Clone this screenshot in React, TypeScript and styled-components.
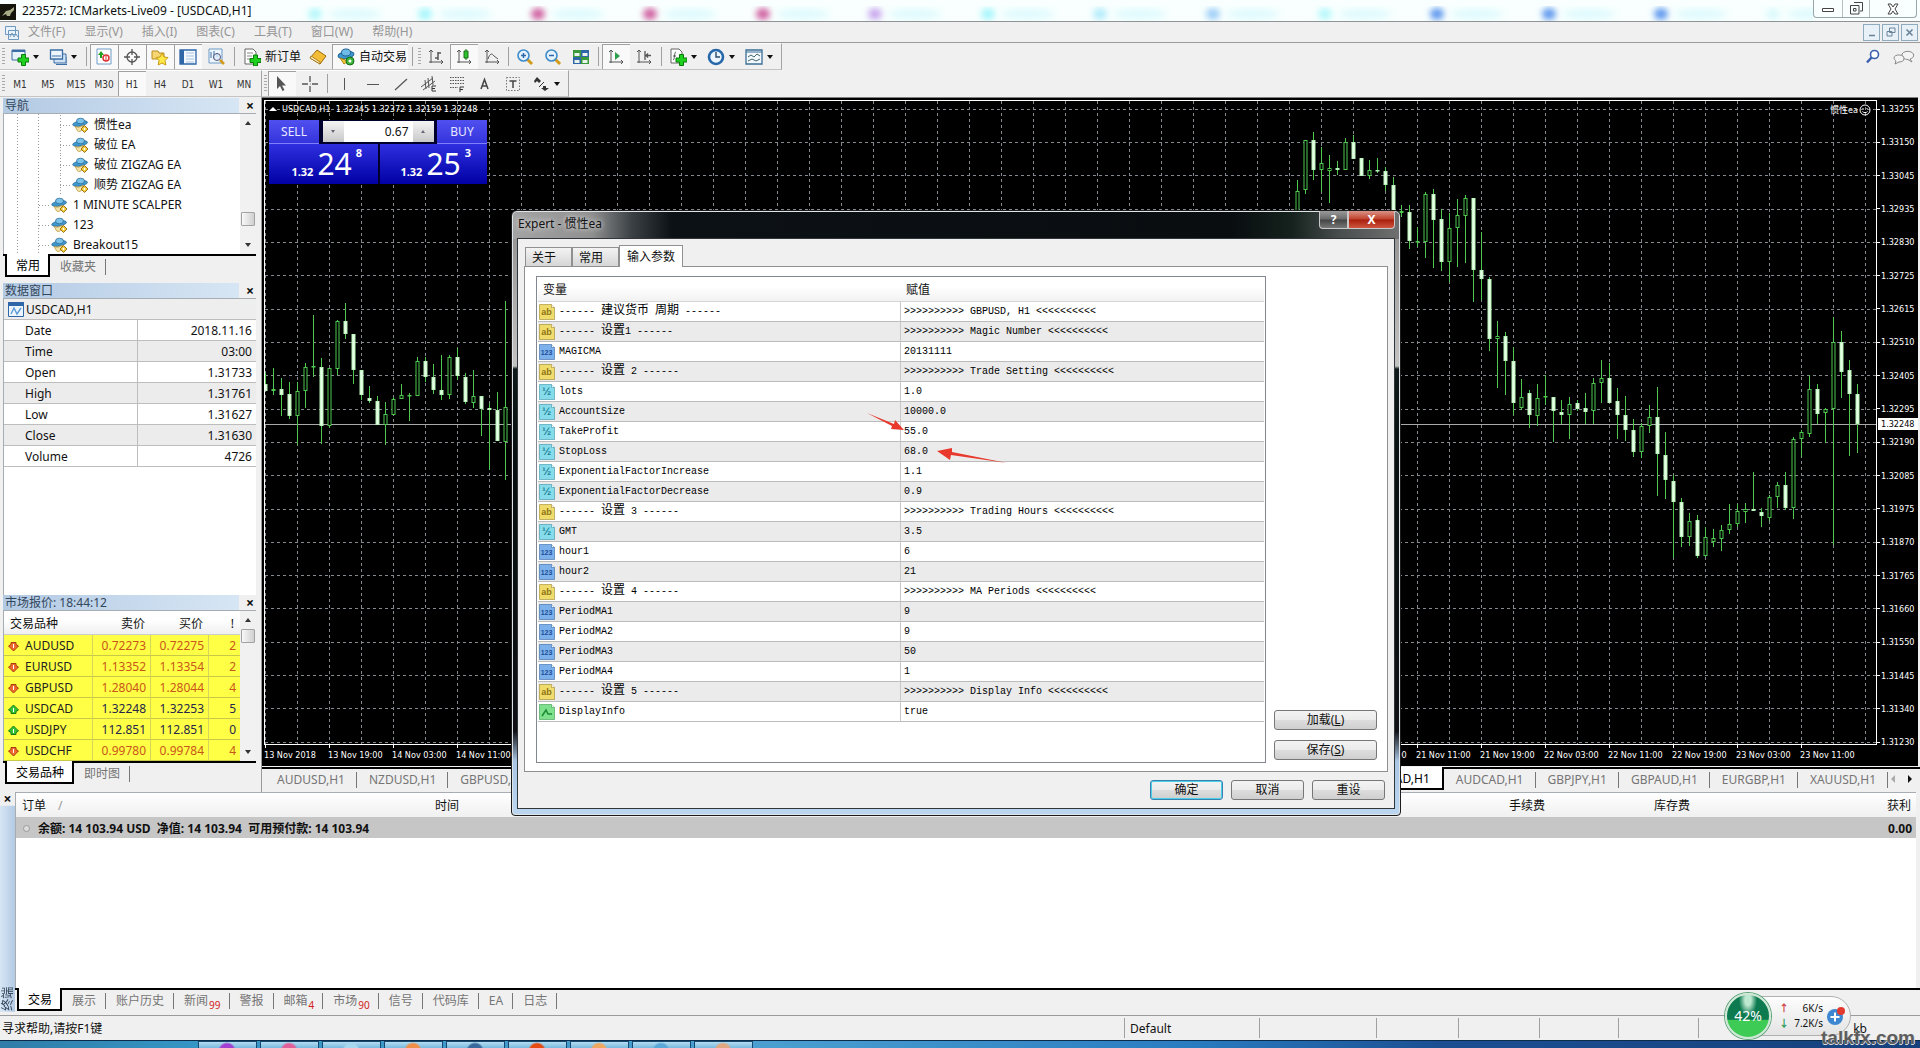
import React from "react";
import styled, { createGlobalStyle, css } from "styled-components";

const UI = `"Noto Sans", "Noto Sans CJK SC", sans-serif`;
const SMALL = `"DejaVu Sans Condensed", "Noto Sans", "Noto Sans CJK SC", sans-serif`;
const MONO = `"Liberation Mono", "Noto Sans CJK SC", monospace`;

const GlobalStyle = createGlobalStyle`
  *, *::before, *::after { box-sizing: border-box; }
  body { margin: 0; font: 12px/16px ${UI}; color: #111; background: #f0f0f0; overflow: hidden; }
  button, input { font: inherit; color: inherit; margin: 0; padding: 0; border: 0; background: none; border-radius: 0; }
  table { border-collapse: separate; border-spacing: 0; table-layout: fixed; width: 100%; }
  th, td { padding: 2px 0 0; font-weight: normal; text-align: left; white-space: nowrap; overflow: hidden; }
  svg { display: block; flex: none; }
`;

/* ---------- shell ---------- */
const Page = styled.div`
  position: relative;
  display: flex;
  flex-direction: column;
  height: 100vh;
  overflow: hidden;
`;
const TitleBar = styled.header`
  display: flex;
  align-items: stretch;
  flex: none;
  height: 22px;
  background-color: #f8fffe;
  border-bottom: 1px solid #8f9396;
`;
const AppName = styled.h1`
  display: flex;
  align-items: center;
  gap: 6px;
  margin: 0;
  font-size: 12px;
  line-height: 20px;
  font-weight: normal;
  white-space: nowrap;
`;
const Glow = styled.svg`
  flex: 1 1 0;
  min-width: 0;
  height: 21px;
`;
const WindowButtons = styled.div`
  display: flex;
  height: 18px;
  margin-right: 3px;
  border: 1px solid #97a6a8;
  border-top: 0;
  border-radius: 0 0 4px 4px;
`;
const WindowButton = styled.button<{ $w: number }>`
  display: flex;
  align-items: center;
  justify-content: center;
  width: ${(p) => p.$w}px;
  & + & { border-left: 1px solid #b4c0c2; }
`;
const MenuBar = styled.nav`
  display: flex;
  align-items: center;
  flex: none;
  height: 21px;
  padding-left: 5px;
  border-bottom: 1px solid #9b9b9b;
`;
const MenuItem = styled.button`
  margin-left: 9px;
  padding: 0 5px;
  color: #969696;
  white-space: nowrap;
  &:first-of-type { margin-left: 3px; }
`;
const MdiButtons = styled.div`
  display: flex;
  gap: 2px;
  margin-left: auto;
  padding-right: 2px;
`;
const MdiButton = styled.button`
  display: flex;
  align-items: center;
  justify-content: center;
  width: 17px;
  height: 17px;
  border: 1px solid #8fa9bd;
  background: #e8f1f8;
`;
const ToolRow = styled.div`
  display: flex;
  flex: none;
  height: 27px;
  background: #f0f0f0;
`;
const ToolGroup = styled.div`
  display: flex;
  align-items: stretch;
  padding-right: 3px;
  border-top: 1px solid #fff;
  border-right: 1px solid #a5a5a5;
  border-bottom: 1px solid #c4c4c4;
`;
const Handle = styled.span`
  width: 6px;
  margin: 4px 0;
  background: repeating-linear-gradient(#a8a8a8 0 1px, transparent 1px 3px) 2px 0 / 3px 100% no-repeat;
`;
const Divider = styled.span<{ $w: number }>`
  width: ${(p) => p.$w}px;
  margin: 3px 0;
  background: linear-gradient(#a0a0a0, #a0a0a0) center / 1px 100% no-repeat;
`;
const Tool = styled.button<{ $w?: number; $on?: boolean }>`
  display: flex;
  align-items: center;
  gap: 4px;
  width: ${(p) => p.$w ?? 28}px;
  padding-left: 5px;
  white-space: nowrap;
  ${(p) => p.$on && css`
    background: #f9f9f9;
    box-shadow: inset 1px 1px 0 #a0a0a0;
  `}
`;
const Period = styled.button<{ $on?: boolean }>`
  width: 28px;
  padding-top: 2px;
  font: 10px/14px ${SMALL};
  color: #333;
  text-align: center;
  ${(p) => p.$on && css`
    background: #f9f9f9;
    box-shadow: inset 1px 1px 0 #a0a0a0;
  `}
`;
const ToolEnd = styled.div`
  display: flex;
  align-items: center;
  gap: 12px;
  margin-left: auto;
  padding-right: 5px;
`;
const Caret = styled.span`
  border: 3px solid transparent;
  border-top: 4px solid #111;
  border-bottom: 0;
`;

/* ---------- docked panels ---------- */
const Main = styled.main`
  display: flex;
  flex: 696 1 0;
  min-height: 0;
`;
const Side = styled.aside`
  display: flex;
  flex-direction: column;
  flex: none;
  width: 262px;
  padding: 1px 5px 4px 3px;
  border-right: 1px solid #999;
`;
const Panel = styled.section<{ $grow?: boolean }>`
  display: flex;
  flex-direction: column;
  flex: ${(p) => (p.$grow ? "1 1 0" : "none")};
  min-height: 0;
`;
const PanelHead = styled.header`
  display: flex;
  flex: none;
  height: 16px;
  border-bottom: 1px solid #a7adb3;
`;
const PanelTitle = styled.h2`
  flex: 1;
  margin: 0;
  padding-left: 2px;
  font-size: 12px;
  line-height: 15px;
  font-weight: normal;
  color: #33475c;
  background: linear-gradient(90deg, #b3cae4, #d7e6f4);
`;
const CloseButton = styled.button`
  width: 15px;
  font-size: 14px;
  line-height: 14px;
  font-weight: bold;
`;
const SideClose = styled(CloseButton)`
  width: 17px;
  padding-left: 5px;
`;
const PanelBody = styled.div<{ $grow?: boolean; $h?: number }>`
  display: flex;
  flex: ${(p) => (p.$grow ? "1 1 0" : "none")};
  ${(p) => p.$h && css`height: ${p.$h}px;`}
  min-height: 0;
  border-left: 1px solid #a7adb3;
  background: #fff;
`;
const Tree = styled.ul`
  flex: 1;
  margin: 0;
  padding: 1px 0 0;
  list-style: none;
  overflow: hidden;
  background:
    repeating-linear-gradient(#9a9a9a 0 1px, transparent 1px 3px) 13px 0 / 1px 100% no-repeat,
    repeating-linear-gradient(#9a9a9a 0 1px, transparent 1px 3px) 34px 0 / 1px 100% no-repeat,
    #fff;
`;
const TreeItem = styled.li<{ $deep?: boolean }>`
  display: flex;
  align-items: center;
  gap: 5px;
  height: 20px;
  padding-left: ${(p) => (p.$deep ? 56 : 35)}px;
  white-space: nowrap;
  &::before {
    content: "";
    flex: none;
    width: 11px;
    height: ${(p) => (p.$deep ? 20 : 1)}px;
    margin-right: -4px;
    background:
      repeating-linear-gradient(90deg, #9a9a9a 0 1px, transparent 1px 3px) 0 50% / 100% 1px no-repeat,
      ${(p) => (p.$deep ? "repeating-linear-gradient(#9a9a9a 0 1px, transparent 1px 3px) 0 0 / 1px 100% no-repeat" : "none")};
  }
`;
const Scroll = styled.div`
  display: flex;
  flex-direction: column;
  align-items: center;
  flex: none;
  width: 16px;
  background: #f1f1f1;
`;
const ScrollArrow = styled.button<{ $up?: boolean }>`
  width: 16px;
  height: 18px;
  display: flex;
  align-items: center;
  justify-content: center;
  &::before {
    content: "";
    border: 3px solid transparent;
    ${(p) => (p.$up ? "border-bottom: 4px solid #333; border-top: 0;" : "border-top: 4px solid #333; border-bottom: 0;")}
  }
`;
const Thumb = styled.span`
  width: 14px;
  height: 14px;
  border: 1px solid #a2a2a2;
  border-radius: 1px;
  background: linear-gradient(90deg, #f8f8f8, #d0d0d0);
`;
const Spacer = styled.span<{ $n?: number }>`
  flex: ${(p) => p.$n ?? 1};
`;
const Tabs = styled.nav<{ $h: number }>`
  display: flex;
  align-items: flex-start;
  flex: none;
  height: ${(p) => p.$h}px;
  padding-left: 2px;
  border-top: 2px solid #000;
`;
const Tab = styled.button<{ $on?: boolean }>`
  display: flex;
  align-items: center;
  height: 20px;
  padding: 2px 10px 0;
  color: #757575;
  white-space: nowrap;
  background: linear-gradient(#777, #777) right 3px / 1px 16px no-repeat;
  ${(p) => p.$on && css`
    height: 23px;
    margin-top: -2px;
    color: #000;
    background: #fff;
    border: solid #000;
    border-width: 0 2px 2px 2px;
    padding: 3px 8px 0 9px;
  `}
`;
const Count = styled.span`
  align-self: flex-end;
  margin: 0 -1px -2px 1px;
  font-size: 10px;
  line-height: 14px;
  color: #d42020;
`;
const DataTable = styled.table`
  align-self: flex-start;
  caption {
    height: 21px;
    padding: 1px 0 0 4px;
    background: #eee;
    border-bottom: 1px solid #bdbdbd;
  }
  tr:nth-child(even) { background: #ececec; }
  th, td { height: 21px; border-bottom: 1px solid #bdbdbd; }
  th { width: 134px; padding-left: 21px; border-right: 1px solid #bdbdbd; }
  td { text-align: right; padding-right: 4px; }
`;
const CaptionLine = styled.span`
  display: flex;
  align-items: center;
  gap: 2px;
  height: 19px;
`;
const QuoteTable = styled.table`
  align-self: flex-start;
  flex: 1;
  width: 0;
  th { height: 24px; background: linear-gradient(#fff 40%, #efefef); border-bottom: 1px solid #ccc; }
  td { height: 21px; background: #ffff45; border-bottom: 1px solid #c9c948; border-right: 1px solid #d5d55a; }
  td:last-child { border-right: 0; }
  th:not(:first-child), td:not(:first-child) { text-align: right; padding-right: 4px; }
  th:not(:first-child) { padding-right: 6px; }
  th:first-child { padding-left: 6px; }
`;
const QuoteRow = styled.tr<{ $down: boolean }>`
  color: ${(p) => (p.$down ? "#c8561a" : "#26264a")};
`;
const SymbolName = styled.span`
  display: flex;
  align-items: center;
  gap: 6px;
  padding-left: 4px;
  color: #222;
`;

/* ---------- chart ---------- */
const ChartColumn = styled.section`
  display: flex;
  flex-direction: column;
  flex: 1;
  min-width: 0;
`;
const ChartWindow = styled.div`
  position: relative;
  display: grid;
  grid-template: minmax(0, 1fr) 20px / minmax(0, 1fr) 41px;
  flex: 1;
  min-height: 0;
  margin-right: 2px;
  padding: 2px 0 1px 2px;
  border-top: 1px solid #808080;
  background: #000;
  color: #fff;
  font: 9px/12px ${SMALL};
`;
const Plot = styled.div`
  position: relative;
  min-width: 0;
  min-height: 0;
  overflow: hidden;
  border: 1px solid #fff;
  svg { width: 100%; height: 100%; }
`;
const PriceAxis = styled.div`
  position: relative;
  display: flex;
  flex-direction: column;
  justify-content: space-between;
  padding: 3px 0 0;
  margin-bottom: -3px;
`;
const PriceLabel = styled.span`
  display: flex;
  align-items: center;
  gap: 1px;
  &::before { content: ""; width: 3px; height: 1px; background: #fff; }
`;
const PriceTag = styled.span`
  position: absolute;
  top: 318px;
  left: 1px;
  right: 0;
  padding-left: 3px;
  color: #000;
  background: #fff;
`;
const TimeAxis = styled.div`
  display: flex;
  overflow: hidden;
`;
const TimeLabel = styled.span`
  flex: none;
  width: 64px;
  white-space: nowrap;
  &::before { content: ""; display: block; width: 1px; height: 3px; margin: 0 0 1px 1px; background: #fff; }
`;
const ChartCaption = styled.p`
  position: absolute;
  top: 2px;
  left: 4px;
  display: flex;
  align-items: center;
  gap: 5px;
  margin: 0;
  white-space: pre;
`;
const ExpertMark = styled.span`
  position: absolute;
  top: 3px;
  right: 5px;
  display: flex;
  align-items: center;
  gap: 1px;
`;
const TradeBox = styled.div`
  position: absolute;
  top: 19px;
  left: 4px;
  display: grid;
  grid-template-columns: 109px 107px;
  grid-template-rows: 24px 40px;
  width: 218px;
  column-gap: 2px;
  background: #00002c;
  font: 12px/16px ${UI};
`;
const TradeTop = styled.div`
  grid-column: 1 / 3;
  display: flex;
  justify-content: space-between;
`;
const TradeButton = styled.button`
  width: 50px;
  height: 24px;
  color: #e8e8ff;
  background: linear-gradient(#5050f0, #3434dc);
  border-bottom: 1px solid #8080ff;
`;
const Stepper = styled.div`
  display: flex;
  width: 111px;
  height: 21px;
  margin-top: 1px;
  background: #fff;
  color: #111;
`;
const Step = styled.button<{ $up?: boolean }>`
  display: flex;
  align-items: center;
  justify-content: center;
  width: 21px;
  background: linear-gradient(#f4f4f4, #c8c8c8);
  &::before {
    content: "";
    border: 2px solid transparent;
    ${(p) => (p.$up ? "border-bottom: 3px solid #667; border-top: 0;" : "border-top: 3px solid #667; border-bottom: 0;")}
  }
`;
const Volume = styled.input`
  flex: 1;
  min-width: 0;
  padding-right: 4px;
  text-align: right;
`;
const Quote = styled.div`
  display: flex;
  align-items: flex-end;
  justify-content: flex-end;
  gap: 4px;
  padding: 0 16px 4px 0;
  background: linear-gradient(#2f2fe0, #0000a4);
`;
const QuoteBase = styled.b`
  font-size: 11px;
  line-height: 16px;
`;
const QuoteBig = styled.span`
  font: 30px/32px ${UI};
`;
const QuotePip = styled.b`
  align-self: flex-start;
  padding-top: 1px;
  font-size: 11px;
  line-height: 16px;
`;
const ChartTabs = styled.nav`
  display: flex;
  align-items: flex-start;
  flex: none;
  height: 25px;
  border-top: 2px solid #000;
  margin-top: 1px;
`;
const ChartTab = styled(Tab)`
  padding: 2px 12px 0;
`;
const TabArrows = styled.div`
  display: flex;
  gap: 13px;
  padding: 6px 8px 0 3px;
`;
const TabArrow = styled.button<{ $left?: boolean }>`
  border: 4px solid transparent;
  ${(p) => (p.$left ? "border-right: 4px solid #aaa; border-left: 0;" : "border-left: 4px solid #111; border-right: 0;")}
`;

/* ---------- terminal ---------- */
const Terminal = styled.section`
  display: flex;
  flex: 223 1 0;
  min-height: 0;
  border-bottom: 1px solid #9b9b9b;
`;
const Spine = styled.div`
  display: flex;
  flex-direction: column;
  flex: none;
  width: 15px;
  padding-bottom: 3px;
`;
const SpineTitle = styled.h2`
  flex: 1;
  margin: 0;
  padding-top: 1px;
  font-size: 12px;
  line-height: 15px;
  font-weight: normal;
  color: #33475c;
  background: linear-gradient(90deg, #b3cae4, #d7e6f4);
  writing-mode: vertical-rl;
  text-orientation: sideways;
  transform: rotate(180deg);
`;
const TerminalBody = styled.div`
  display: flex;
  flex-direction: column;
  flex: 1;
  min-width: 0;
`;
const Orders = styled.div`
  flex: 1;
  min-height: 0;
  margin-right: 4px;
  border-top: 1px solid #a7adb3;
  border-left: 1px solid #a7adb3;
  background: #fff;
`;
const OrderTable = styled.table`
  th { height: 24px; padding: 2px 5px 0; text-align: right; background: linear-gradient(#fff, #f0f0f0); }
  th:first-child { padding-left: 6px; text-align: left; }
  td { height: 21px; font-weight: bold; background: #c6c6c6; }
  td:last-child { padding-right: 4px; text-align: right; }
`;
const SortMark = styled.span`
  margin-left: 12px;
  color: #999;
`;
const Balance = styled.span`
  display: flex;
  align-items: center;
  gap: 7px;
  padding-left: 6px;
`;
const StatusBar = styled.footer`
  display: flex;
  align-items: center;
  flex: none;
  height: 24px;
`;
const StatusText = styled.span`
  flex: 1;
  padding: 2px 0 0 2px;
`;
const StatusCell = styled.span<{ $w: number }>`
  width: ${(p) => p.$w}px;
  height: 20px;
  padding: 3px 5px 0;
  border-left: 1px solid #a0a0a0;
`;
const Taskbar = styled.div`
  display: flex;
  align-items: flex-start;
  flex: none;
  gap: 3px;
  height: 8px;
  padding-left: 198px;
  border-top: 1px solid #0b2c4a;
  background: linear-gradient(90deg, #2f7da8, #3595c4 10%, #4a9fd0 40%, #2a7cc0 62%, #1b4f92 75%, #17407c);
  overflow: hidden;
`;
const Task = styled.span<{ $c: string }>`
  width: 59px;
  height: 8px;
  border: 1px solid #144a72;
  border-bottom: 0;
  background: radial-gradient(circle at 28px 9px, ${(p) => p.$c} 0 7px, transparent 9px), linear-gradient(#b5dcf0, #6db4dc);
`;
const NetWidget = styled.div`
  position: absolute;
  right: 69px;
  bottom: 9px;
  display: flex;
  align-items: center;
  width: 126px;
  height: 46px;
`;
const NetPill = styled.div`
  display: flex;
  align-items: center;
  justify-content: space-between;
  flex: 1;
  height: 40px;
  margin-left: -23px;
  padding: 0 5px 0 30px;
  border: 1px solid #b0b0b0;
  border-radius: 0 20px 20px 0;
  background: linear-gradient(#fdfdfd, #e4e4e4);
`;
const NetBall = styled.div`
  position: relative;
  z-index: 1;
  display: flex;
  align-items: center;
  justify-content: center;
  width: 46px;
  height: 46px;
  border: 2px solid #cfe8d6;
  border-radius: 50%;
  color: #fff;
  font-size: 14px;
  background: radial-gradient(ellipse at 50% 12%, #bfe8d0 0 3px, transparent 9px), linear-gradient(#0d7a50 0 58%, #3ecb55 60%);
  box-shadow: 0 0 0 1px #5ba377;
`;
const Rates = styled.div`
  display: flex;
  flex-direction: column;
  gap: 2px;
`;
const Rate = styled.span<{ $c: string }>`
  display: flex;
  justify-content: space-between;
  width: 44px;
  font-size: 10px;
  line-height: 13px;
  i { color: ${(p) => p.$c}; font-style: normal; font-weight: bold; }
`;
const Watermark = styled.span`
  position: absolute;
  right: 5px;
  bottom: -1px;
  font: bold 19px/22px "Liberation Sans", sans-serif;
  color: #5d5d5d;
  text-shadow: 1px 0 0 #ddd, 0 1px 0 #ddd;
`;
const Traffic = styled.span`
  position: absolute;
  right: 53px;
  bottom: 11px;
`;

/* ---------- dialog ---------- */
const Dialog = styled.section`
  position: absolute;
  top: 210px;
  left: 511px;
  display: flex;
  flex-direction: column;
  width: 890px;
  padding: 0 5px 6px;
  border: 1px solid #1c1c1c;
  border-radius: 6px 6px 4px 4px;
  box-shadow: inset 0 0 0 1px #dfe4e8;
  background:
    linear-gradient(90deg, #a4a4a4 0, #8f8f8f 80px, #3a4044 120px, #0c1115 160px, #090d10 720px, #15221d 780px, #4b4f50 830px, #707070) 0 0 / 100% 28px no-repeat,
    linear-gradient(#8d8d8d 0, #c3c3c3 155px, #101a1a 158px, #07100e 250px, #101015 520px, #a9c6e4 550px, #bcd6f0);
`;
const DialogHead = styled.header`
  display: flex;
  align-items: flex-start;
  height: 27px;
`;
const DialogTitle = styled.h2`
  flex: 1;
  margin: 0;
  padding-left: 1px;
  font-size: 12px;
  line-height: 26px;
  font-weight: normal;
  text-shadow: 0 0 4px #ddd, 0 0 8px #ccc;
`;
const HeadButton = styled.button<{ $close?: boolean }>`
  width: ${(p) => (p.$close ? 47 : 29)}px;
  height: 18px;
  color: #fff;
  font-weight: bold;
  line-height: 16px;
  border: 1px solid #c9c9c9;
  border-top: 0;
  border-radius: ${(p) => (p.$close ? "0 0 4px 0" : "0 0 0 4px")};
  background: ${(p) => (p.$close ? "linear-gradient(#d99387, #c2412c 48%, #a81f0c 52%, #cf5540)" : "linear-gradient(#9a9a9a, #6a6a6a 48%, #444 52%, #777)")};
`;
const DialogBody = styled.div`
  padding: 6px 6px 8px;
  border: 1px solid #30363a;
  background: #f0f0f0;
`;
const SheetTabs = styled.div`
  display: flex;
  align-items: flex-end;
  padding-left: 1px;
`;
const SheetTab = styled.button<{ $on?: boolean }>`
  width: 47px;
  height: 19px;
  padding: 1px 6px 0;
  text-align: left;
  border: 1px solid #909090;
  border-bottom: 0;
  background: linear-gradient(#f3f3f3, #d6d6d6);
  ${(p) => p.$on && css`
    width: 64px;
    height: 22px;
    padding: 0 7px;
    margin-bottom: -1px;
    background: #fff;
  `}
`;
const Sheet = styled.div`
  display: flex;
  gap: 8px;
  padding: 9px 10px 8px 11px;
  border: 1px solid #909090;
  background: #fff;
`;
const ParamFrame = styled.div`
  position: relative;
  flex: 1;
  min-width: 0;
  padding: 0 1px 40px;
  border: 1px solid #828790;
`;
const ParamTable = styled.table`
  th { height: 25px; padding-left: 5px; border-bottom: 1px solid #d5d5d5; background: linear-gradient(#fff 40%, #f2f2f2); }
  td { height: 20px; padding-top: 0; border-bottom: 1px solid #bcbcbc; font: 10px/19px ${MONO}; color: #000; white-space: pre; }
  td:first-child { border-right: 1px solid #c8c8c8; }
  td:last-child { padding-left: 3px; }
  tbody tr:nth-child(even) { background: #ebebeb; }
`;
const ParamName = styled.span`
  display: flex;
  align-items: center;
  gap: 4px;
  padding-left: 1px;
`;
const Han = styled.span`
  font-size: 12px;
`;
const SheetSide = styled.div`
  display: flex;
  flex-direction: column;
  justify-content: flex-end;
  gap: 10px;
  width: 103px;
  padding-bottom: 3px;
`;
const PushButton = styled.button<{ $default?: boolean; $w?: number }>`
  width: ${(p) => (p.$w ? `${p.$w}px` : "100%")};
  height: 20px;
  line-height: 16px;
  border: 1px solid #777;
  border-radius: 3px;
  background: linear-gradient(#f3f3f3, #ebebeb 48%, #dddddd 52%, #cfcfcf);
  ${(p) => p.$default && css`
    border-color: #3c7fb1;
    box-shadow: inset 0 0 0 1px #48d1e8;
  `}
`;
const DialogFoot = styled.div`
  display: flex;
  justify-content: flex-end;
  gap: 8px;
  padding: 8px 3px 0 0;
`;
const Arrows = styled.svg`
  position: absolute;
  top: 128px;
  left: 328px;
`;

/* ---------- icons ---------- */
const plus = <path d="M9 10h3V7h4v3h3v4h-3v3h-4v-3H9z" fill="#1fd01f" stroke="#0a7a0a" strokeWidth="0.8" />;
const axes = <path d="M4 2v13M2 14h14M2 4l2-2 2 2M14 12l2 2-2 2" fill="none" stroke="#555" />;
const ICONS: Record<string, React.ReactNode> = {
  newChart: <><path d="M1 2h13v10H1z" fill="#e6f1fb" stroke="#3b6ea5" /><path d="M1 3h13" stroke="#3b6ea5" strokeWidth="2" /><path d="M7 10h3.500V6.500h4V10H18v4h-3.500v3.500h-4V14H7z" fill="#1fd01f" stroke="#0a7a0a" /></>,
  profiles: <><path d="M5 6h12v9H5z" fill="#cfe2f4" stroke="#3b6ea5" /><path d="M1.500 2h12v9h-12z" fill="#eef6fd" stroke="#3b6ea5" strokeWidth="1.300" /><path d="M3 8h9M7 16.500h11V9" fill="none" stroke="#3b6ea5" /></>,
  market: <><path d="M2 1h14v15H2z" fill="#fff" stroke="#6c9ac6" /><path d="M6 3l3 4H7v3H5V7H3z" fill="#22a022" /><circle cx="11" cy="10" r="3" fill="#fff" stroke="#d33" strokeWidth="1.500" /><path d="M11 8v5" stroke="#d33" /></>,
  cross: <><circle cx="9" cy="9" r="5" fill="none" stroke="#555" strokeWidth="1.300" /><path d="M9 1v6M9 11v6M1 9h6M11 9h6" stroke="#555" strokeWidth="1.300" /></>,
  star: <><path d="M1 3h6l1 2h5v6H1z" fill="#f7d774" stroke="#b88a1c" /><path d="M11 5l2 4 4 .5-3 3 .8 4.500-3.800-2-3.800 2L8 12.500l-3-3L9 9z" fill="#ffe84a" stroke="#c79a12" /></>,
  dataWin: <><path d="M1 2h16v14H1z" fill="#f2f8fe" stroke="#2f66a8" strokeWidth="1.300" /><path d="M1 2h4v14H1z" fill="#2f66a8" /><path d="M7 5h8M7 8h8M7 11h8M7 14h8" stroke="#a9c4de" /></>,
  tester: <><path d="M2 1h13v14H2z" fill="#eef6fd" stroke="#6c9ac6" /><path d="M4 4v6M7 3v8M10 5v4" stroke="#3b6ea5" /><circle cx="10" cy="9" r="3.500" fill="#d9ecfb" fillOpacity=".8" stroke="#557" /><path d="M13 12l4 4" stroke="#d39b1c" strokeWidth="2.500" /></>,
  order: <><path d="M2 1h8l3 3v12H2z" fill="#fff" stroke="#666" /><path d="M4 5h6M4 8h5M4 11h3" stroke="#888" /><path d="M7 10.500h3.500V7h4v3.500H18v4h-3.500V18h-4v-3.500H7z" fill="#1fd01f" stroke="#0a7a0a" /></>,
  book: <><path d="M1 10l7-8 9 6-6 8z" fill="#f3bd35" stroke="#9c6a08" /><path d="M1 10l10 6v-2L2 8z" fill="#fff2c0" stroke="#9c6a08" strokeWidth=".8" /></>,
  auto: <><ellipse cx="9" cy="7" rx="8" ry="3.500" fill="#3f97cf" stroke="#1d6396" transform="rotate(-8 9 7)" /><ellipse cx="9" cy="4.500" rx="4.500" ry="3.500" fill="#70bce8" stroke="#1d6396" /><path d="M3 10l4 6 4-3z" fill="#f4c93a" stroke="#ad8213" /><circle cx="13" cy="13" r="4" fill="#3bb53b" stroke="#157015" /><circle cx="13" cy="13" r="1.500" fill="#fff" /></>,
  bars: <>{axes}<path d="M11 4v8M11 5h3M8 10h3" stroke="#555" strokeWidth="1.500" /></>,
  candles: <>{axes}<path d="M11 1v11" stroke="#157015" /><path d="M9 3h4v7H9z" fill="#2ec22e" stroke="#157015" /></>,
  line: <>{axes}<path d="M5 11c2-6 4-6 6-3l4 3" fill="none" stroke="#555" /></>,
  zoomIn: <><path d="M11 11l5 5" stroke="#d39b1c" strokeWidth="3" /><circle cx="7.500" cy="7.500" r="5.500" fill="#e4f3fd" stroke="#3f8cc9" strokeWidth="1.600" /><path d="M5 7.500h5M7.500 5v5" stroke="#2f66a8" strokeWidth="1.500" /></>,
  zoomOut: <><path d="M11 11l5 5" stroke="#d39b1c" strokeWidth="3" /><circle cx="7.500" cy="7.500" r="5.500" fill="#e4f3fd" stroke="#3f8cc9" strokeWidth="1.600" /><path d="M5 7.500h5" stroke="#2f66a8" strokeWidth="1.500" /></>,
  tiles: <><path d="M1 2h8v7H1zM9 9h8v7H9z" fill="#3a9a3a" /><path d="M9 2h8v7H9zM1 9h8v7H1z" fill="#2f66a8" /><path d="M2.500 5h5v3h-5zM10.500 5h5v3h-5zM2.500 12h5v3h-5zM10.500 12h5v3h-5z" fill="#eaf4ee" /></>,
  scroll: <>{axes}<path d="M8 4l5 4-5 4z" fill="#2e9f4e" /></>,
  shift: <>{axes}<path d="M10 3v9M16 7.500h-5M13 5.500l-2 2 2 2" fill="none" stroke="#555" strokeWidth="1.300" /></>,
  indicators: <><path d="M2 1h8l3 3v11H2z" fill="#fff" stroke="#666" /><path d="M7 4c-2 0-1 8-3 8M4 8h3" fill="none" stroke="#555" /><path d="M7 10h3.500V6.500h4V10H18v4h-3.500v3.500h-4V14H7z" fill="#1fd01f" stroke="#0a7a0a" /></>,
  clock: <><circle cx="9" cy="9" r="7" fill="#eaf5fd" stroke="#2567a8" strokeWidth="2.600" /><path d="M9 4v5h4" fill="none" stroke="#2b4a6a" strokeWidth="1.400" /></>,
  template: <><path d="M1 2h16v14H1z" fill="#f2f8fe" stroke="#3b6e95" strokeWidth="1.300" /><path d="M1 4h16" stroke="#3b6e95" /><path d="M3 9l3-2 3 2 3-3 3 2M3 13l4-2 4 2 4-2" fill="none" stroke="#466" /></>,
  arrow: <path d="M4 1v13l3-3 2.500 5 2-1L9 10.500h4z" fill="#555" />,
  crossHair: <path d="M9 1v6M9 11v6M1 9h6M11 9h6M9 9h.5" stroke="#555" strokeWidth="1.300" />,
  vline: <path d="M8.500 3v12" stroke="#555" />,
  hline: <path d="M3 9.500h12" stroke="#555" />,
  trend: <path d="M3 15L15 4" stroke="#555" strokeWidth="1.200" />,
  channel: <><path d="M1 12l12-9M3 15l12-9M5 5l1 9M8 3l1 10M12 1l1 9" fill="none" stroke="#555" /><path d="M16 11h-4v5h4M12 13.500h3" fill="none" stroke="#333" /></>,
  fibo: <><path d="M2 2.500h14M2 5.500h14M2 8.500h14M2 12.500h8" stroke="#555" strokeDasharray="1.500 1" /><path d="M16 12h-4v5M12 14.500h3" fill="none" stroke="#333" /></>,
  text: <path d="M5 14L8.500 4.500 12 14M6 11h5" fill="none" stroke="#444" strokeWidth="1.500" />,
  label: <><path d="M2.500 2.500h13v13h-13z" fill="none" stroke="#777" strokeDasharray="1.500 1.500" /><path d="M5.500 6h7M9 6v7" stroke="#444" strokeWidth="1.500" /></>,
  shapes: <><path d="M5 2l4 4-2 2-2-2-2 2-1-2zM13 16l-4-3h2v-2h3v2h3z" fill="#333" /><path d="M7 12l5-5" stroke="#333" /></>,
};
const Icon = ({ name, size = 18 }: { name: string; size?: number }) => (
  <svg width={size} height={size} viewBox="0 0 18 18" aria-hidden="true">{ICONS[name] ?? plus}</svg>
);
const ExpertIcon = () => (
  <svg width="17" height="16" viewBox="0 0 17 16" aria-hidden="true">
    <ellipse cx="8" cy="6.500" rx="7.500" ry="2.500" fill="#3f97cf" stroke="#2a6d99" strokeWidth=".8" transform="rotate(-10 8 6)" />
    <ellipse cx="8.500" cy="4" rx="4" ry="2.800" fill="#7cc3ea" stroke="#2a6d99" strokeWidth=".8" />
    <path d="M3 9c2 2 6 1 8-1l-1 5c-2 2-4 2-5 0z" fill="#f2e2a8" stroke="#b08a2c" strokeWidth=".7" />
    <path d="M12.500 8.500l3.500 3.500-3.500 3.500L9 12z" fill="#f4c93a" stroke="#9c7411" />
    <path d="M12.500 11v2M11.500 12h2" stroke="#fff" />
  </svg>
);
const TrendMark = ({ down }: { down: boolean }) => (
  <svg width="11" height="11" viewBox="0 0 11 11" aria-hidden="true">
    {down
      ? <path d="M5.500 10L.5 5 3 3.500V1.500h5v2L10.500 5z" fill="#ef6a2e" stroke="#a83a12" />
      : <path d="M5.500 1l5 5L8 7.500v2H3v-2L.5 6z" fill="#35c235" stroke="#127812" />}
    <path d={down ? "M5.500 3v4" : "M5.500 4v4"} stroke="#fff" />
  </svg>
);
type Kind = "ab" | "123" | "va" | "bool";
const KIND_COLORS: Record<Kind, [string, string]> = {
  ab: ["#f0dc6c", "#8d7412"],
  "123": ["#7db1ec", "#1c4f96"],
  va: ["#86dcea", "#1f8297"],
  bool: ["#7fe08e", "#1d8c36"],
};
const KIND_TEXT: Record<Kind, string> = { ab: "ab", "123": "123", va: "½", bool: "" };
const KindIcon = ({ kind }: { kind: Kind }) => (
  <svg width="16" height="16" viewBox="0 0 16 16" aria-hidden="true">
    <path d="M.5.5h12l3 3v12H.5z" fill={KIND_COLORS[kind][0]} stroke={KIND_COLORS[kind][1]} strokeOpacity=".5" />
    <path d="M12.500.5v3h3" fill="#fff" stroke={KIND_COLORS[kind][1]} strokeOpacity=".5" />
    {kind === "bool" && <path d="M3 12l4-6 2 4h4" fill="none" stroke={KIND_COLORS[kind][1]} strokeWidth="1.600" />}
    <text x="7.500" y="11" textAnchor="middle" fontFamily="Liberation Sans, sans-serif" fontWeight="bold" fontSize={kind === "123" ? 7 : kind === "va" ? 11 : 9} fill={KIND_COLORS[kind][1]}>{KIND_TEXT[kind]}</text>
  </svg>
);

/* ---------- data ---------- */
const MENUS = ["文件(F)", "显示(V)", "插入(I)", "图表(C)", "工具(T)", "窗口(W)", "帮助(H)"];
const PERIODS = ["M1", "M5", "M15", "M30", "H1", "H4", "D1", "W1", "MN"];
const EXPERTS: [string, boolean][] = [
  ["惯性ea", true], ["破位 EA", true], ["破位 ZIGZAG EA", true], ["顺势 ZIGZAG EA", true],
  ["1 MINUTE SCALPER", false], ["123", false], ["Breakout15", false],
];
const BAR_DATA = [
  ["Date", "2018.11.16"], ["Time", "03:00"], ["Open", "1.31733"], ["High", "1.31761"],
  ["Low", "1.31627"], ["Close", "1.31630"], ["Volume", "4726"],
];
const QUOTES: [string, string, string, string, boolean][] = [
  ["AUDUSD", "0.72273", "0.72275", "2", true], ["EURUSD", "1.13352", "1.13354", "2", true],
  ["GBPUSD", "1.28040", "1.28044", "4", true], ["USDCAD", "1.32248", "1.32253", "5", false],
  ["USDJPY", "112.851", "112.851", "0", false], ["USDCHF", "0.99780", "0.99784", "4", true],
];
const PRICES = [
  "1.33255", "1.33150", "1.33045", "1.32935", "1.32830", "1.32725", "1.32615", "1.32510", "1.32405", "1.32295",
  "1.32190", "1.32085", "1.31975", "1.31870", "1.31765", "1.31660", "1.31550", "1.31445", "1.31340", "1.31230",
];
const HOURS = ["03:00", "11:00", "19:00"];
const DAYS = [13, 14, 15, 16, 19, 20, 21, 22, 23];
const TIMES = DAYS.flatMap((d) => HOURS.map((h) => `${d} Nov ${h}`)).slice(1, 26);
TIMES[0] = "13 Nov 2018";
const PARAMS: [Kind, string, string][] = [
  ["ab", "------ 建议货币 周期 ------", ">>>>>>>>>> GBPUSD, H1 <<<<<<<<<<"],
  ["ab", "------ 设置1 ------", ">>>>>>>>>> Magic Number <<<<<<<<<<"],
  ["123", "MAGICMA", "20131111"],
  ["ab", "------ 设置 2 ------", ">>>>>>>>>> Trade Setting <<<<<<<<<<"],
  ["va", "lots", "1.0"],
  ["va", "AccountSize", "10000.0"],
  ["va", "TakeProfit", "55.0"],
  ["va", "StopLoss", "68.0"],
  ["va", "ExponentialFactorIncrease", "1.1"],
  ["va", "ExponentialFactorDecrease", "0.9"],
  ["ab", "------ 设置 3 ------", ">>>>>>>>>> Trading Hours <<<<<<<<<<"],
  ["va", "GMT", "3.5"],
  ["123", "hour1", "6"],
  ["123", "hour2", "21"],
  ["ab", "------ 设置 4 ------", ">>>>>>>>>> MA Periods <<<<<<<<<<"],
  ["123", "PeriodMA1", "9"],
  ["123", "PeriodMA2", "9"],
  ["123", "PeriodMA3", "50"],
  ["123", "PeriodMA4", "1"],
  ["ab", "------ 设置 5 ------", ">>>>>>>>>> Display Info <<<<<<<<<<"],
  ["bool", "DisplayInfo", "true"],
];
const TERMINAL_TABS: [string, string?][] = [
  ["交易"], ["展示"], ["账户历史"], ["新闻", "99"], ["警报"], ["邮箱", "4"], ["市场", "90"], ["信号"], ["代码库"], ["EA"], ["日志"],
];

/* candles: high, body top, body bottom, low, falling; in thirds of a pixel */
type Bar = [number, number, number, number, number];
const EARLY: Bar[] = [
  [310, 342, 364, 364, 1], [295, 357, 364, 375, 0], [325, 357, 374, 437, 1], [337, 372, 437, 448, 1], [337, 363, 439, 524, 0],
  [280, 291, 364, 415, 0], [136, 288, 291, 320, 0], [264, 292, 469, 522, 1], [295, 295, 469, 475, 0], [150, 154, 298, 316, 0],
  [100, 154, 191, 208, 1], [191, 191, 301, 341, 1], [301, 301, 376, 390, 1], [347, 384, 393, 400, 1], [378, 393, 466, 466, 1],
  [395, 433, 466, 524, 0], [380, 388, 434, 436, 0], [343, 376, 388, 388, 0], [370, 376, 379, 453, 0], [262, 273, 377, 377, 0],
  [262, 273, 321, 337, 1], [283, 321, 361, 372, 1], [256, 361, 376, 390, 1], [256, 262, 376, 387, 0], [235, 262, 319, 330, 1],
  [310, 321, 397, 402, 1], [301, 379, 398, 415, 0], [378, 378, 417, 498, 1], [400, 414, 420, 600, 1], [367, 420, 513, 513, 1],
  [94, 411, 515, 630, 0],
];
const LATE: Bar[] = [
  [300, 333, 400, 420, 0], [181, 181, 331, 342, 0], [157, 181, 269, 300, 1], [200, 249, 270, 335, 0], [225, 265, 274, 368, 0],
  [243, 265, 271, 286, 1], [175, 186, 271, 271, 0], [166, 186, 236, 236, 1], [235, 235, 287, 287, 1], [240, 271, 287, 298, 0],
  [235, 270, 274, 278, 1], [262, 272, 314, 333, 1], [290, 315, 392, 400, 1], [375, 393, 398, 410, 0], [376, 395, 484, 508, 1],
  [440, 484, 487, 500, 0], [336, 343, 487, 535, 0], [326, 343, 419, 563, 1], [388, 418, 545, 574, 1], [400, 445, 545, 605, 0],
  [357, 405, 445, 562, 0], [346, 354, 409, 550, 0], [354, 354, 570, 665, 1], [457, 571, 598, 660, 1], [590, 598, 778, 814, 1],
  [723, 769, 778, 925, 0], [755, 769, 844, 945, 1], [802, 844, 968, 1005, 1], [898, 951, 983, 990, 0], [930, 940, 1006, 1043, 1],
  [911, 954, 1009, 1038, 0], [885, 948, 952, 975, 0], [951, 951, 992, 1087, 1], [960, 997, 1005, 1032, 1], [950, 971, 1006, 1078, 0],
  [960, 969, 987, 992, 1], [940, 985, 997, 1032, 1], [895, 910, 994, 1032, 0], [840, 895, 910, 970, 0], [850, 895, 968, 970, 1],
  [925, 964, 1004, 1078, 1], [947, 1006, 1051, 1083, 1], [1017, 1049, 1116, 1130, 1], [1030, 1039, 1116, 1135, 0], [975, 1011, 1039, 1060, 0],
  [922, 1011, 1122, 1248, 1], [1055, 1126, 1201, 1257, 1], [1185, 1202, 1265, 1435, 1], [1255, 1265, 1370, 1400, 1], [1300, 1323, 1370, 1398, 0],
  [1305, 1320, 1427, 1435, 1], [1342, 1371, 1427, 1430, 0], [1348, 1375, 1387, 1400, 0], [1335, 1351, 1376, 1413, 0], [1272, 1331, 1351, 1363, 0],
  [1272, 1293, 1331, 1340, 0], [1270, 1287, 1297, 1330, 0], [1177, 1287, 1294, 1294, 1], [1285, 1297, 1307, 1342, 1], [1245, 1250, 1314, 1322, 0],
  [1207, 1216, 1250, 1284, 0], [1177, 1216, 1283, 1290, 1], [1070, 1078, 1283, 1318, 0], [1050, 1057, 1076, 1130, 0], [885, 928, 1061, 1070, 0],
  [913, 928, 1001, 1032, 1], [985, 986, 1000, 1090, 0], [712, 785, 988, 1395, 0], [752, 787, 875, 955, 1], [840, 870, 943, 1127, 1],
  [911, 943, 1032, 1118, 1],
];
const Candles = ({ bars, first, offset }: { bars: Bar[]; first: number; offset: number }) => (
  <g stroke="#4fc84f">
    {bars.map(([hi, top, bottom, lo, falling], i) => {
      const x = (first + i) * 8;
      const y = (v: number) => Math.round(v / 3) + offset;
      return (
        <g key={i}>
          <path d={`M${x + 0.5} ${y(hi)}V${y(lo)}`} />
          <rect x={x - 1} y={y(top) + 0.5} width="3" height={Math.max(0.5, y(bottom) - y(top) - 1)} fill={falling ? "#e6ffe6" : "#000"} stroke={falling ? "#b8f5b8" : "#4fc84f"} />
        </g>
      );
    })}
  </g>
);
const PriceChart = () => (
  <svg aria-hidden="true">
    <defs>
      <pattern id="cols" width="32" height="6" patternUnits="userSpaceOnUse">
        <path d="M0 0h1v3H0z" fill="#858a90" />
      </pattern>
    </defs>
    <rect width="100%" height="100%" fill="url(#cols)" />
    <g stroke="#858a90" strokeDasharray="3 3">
      {PRICES.map((p) => {
        const y = Math.round(8 + (133255 - Number(p) * 100000) * 0.3126) + 0.5;
        return <line key={p} x1="0" x2="100%" y1={y} y2={y} />;
      })}
    </g>
    <line x1="0" x2="100%" y1="323.5" y2="323.5" stroke="#a9a9a9" />
    <Candles bars={EARLY} first={0} offset={169} />
    <Candles bars={LATE} first={129} offset={-21} />
  </svg>
);

const GLOWS: [number, string][] = [
  [74, "#b8f8fc"], [184, "#a8f6fc"], [297, "#d060a0"], [409, "#d060a0"], [522, "#d060a0"], [634, "#c9a8ee"], [747, "#a8f6fc"],
  [859, "#b4ecfb"], [972, "#9fcff8"], [1084, "#b8f8fc"], [1196, "#5f98ee"], [1308, "#5f98ee"], [1420, "#5f98ee"], [1532, "#dcfafd"],
];

const splitHan = (s: string) =>
  s.split(/([\u4e00-\u9fff]+)/).map((part, i) => (i % 2 ? <Han key={i}>{part}</Han> : part));

const Drop = ({ name }: { name: string }) => (
  <Tool $w={38} aria-label={name}><Icon name={name} /><Caret /></Tool>
);

export default function App() {
  return (
    <Page>
      <GlobalStyle />
      <TitleBar>
        <AppName>
          <svg width="16" height="18" viewBox="0 0 16 18" aria-hidden="true">
            <path d="M0 2h16v16H0z" fill="#14140c" />
            <path d="M2 14l4-5 4-1 4-3v3l-3 3-1 3H7l-1-2z" fill="#a9ab86" />
          </svg>
          223572: ICMarkets-Live09 - [USDCAD,H1]
        </AppName>
        <Glow aria-hidden="true">
          <defs><filter id="soft"><feGaussianBlur stdDeviation="3" /></filter></defs>
          <g filter="url(#soft)">
            {GLOWS.map(([x, c]) => (
              <g key={x}>
                <ellipse cx={x - 10} cy="14" rx="7" ry="6" fill={c} />
                <ellipse cx={x + 30} cy="14" rx="26" ry="6" fill="#e2fbfe" />
              </g>
            ))}
          </g>
        </Glow>
        <WindowButtons>
          <WindowButton $w={28} aria-label="最小化"><svg width="14" height="10"><path d="M1.500 4.500h11v3h-11z" fill="#fff" stroke="#444" /></svg></WindowButton>
          <WindowButton $w={27} aria-label="还原"><svg width="13" height="13"><path d="M4 .5h8.500V9H10M.5 3.500H9V12H.5zM3.500 6.500H6V9H3.500z" fill="none" stroke="#444" /></svg></WindowButton>
          <WindowButton $w={47} aria-label="关闭"><svg width="12" height="12"><path d="M1 1h3l2 3 2-3h3L8 6l3 5H8L6 8l-2 3H1l3-5z" fill="#fff" stroke="#444" /></svg></WindowButton>
        </WindowButtons>
      </TitleBar>

      <MenuBar>
        <svg width="15" height="15" viewBox="0 0 15 15" aria-hidden="true">
          <path d="M.5 1.500h10v8H.5zM3.500 5.500h10v9h-10z" fill="#eaf3fb" stroke="#6d97bd" />
          <path d="M5 12l2-4 2 4 2-3 2 3" fill="none" stroke="#6d97bd" />
        </svg>
        {MENUS.map((m) => <MenuItem key={m}>{m}</MenuItem>)}
        <MdiButtons>
          <MdiButton aria-label="最小化"><svg width="9" height="9"><path d="M2 7.500h6" stroke="#6a8298" strokeWidth="1.500" /></svg></MdiButton>
          <MdiButton aria-label="还原"><svg width="10" height="10"><path d="M3.500 1h5.500v4.500H3.500zM1 4.500h5V9H1z" fill="none" stroke="#6a8298" /></svg></MdiButton>
          <MdiButton aria-label="关闭"><svg width="9" height="9"><path d="M1.500 1.500l6 6M7.500 1.500l-6 6" stroke="#6a8298" strokeWidth="1.600" /></svg></MdiButton>
        </MdiButtons>
      </MenuBar>

      <ToolRow>
        <ToolGroup>
          <Handle />
          <Drop name="newChart" /><Drop name="profiles" />
          <Divider $w={8} />
          <Tool $on aria-label="市场报价"><Icon name="market" /></Tool>
          <Tool $on aria-label="数据窗口"><Icon name="cross" /></Tool>
          <Tool $on aria-label="导航"><Icon name="star" /></Tool>
          <Tool $on aria-label="终端"><Icon name="dataWin" /></Tool>
          <Tool aria-label="策略测试"><Icon name="tester" /></Tool>
          <Divider $w={8} />
          <Tool $w={66}><Icon name="order" />新订单</Tool>
          <Tool aria-label="编辑器"><Icon name="book" /></Tool>
          <Tool $w={76} $on><Icon name="auto" />自动交易</Tool>
          <Divider $w={8} /><Handle />
          <Tool aria-label="柱状图"><Icon name="bars" /></Tool>
          <Tool $on aria-label="蜡烛图"><Icon name="candles" /></Tool>
          <Tool aria-label="折线图"><Icon name="line" /></Tool>
          <Divider $w={5} />
          <Tool aria-label="放大"><Icon name="zoomIn" /></Tool>
          <Tool aria-label="缩小"><Icon name="zoomOut" /></Tool>
          <Tool aria-label="平铺"><Icon name="tiles" /></Tool>
          <Divider $w={7} />
          <Tool $on aria-label="自动滚动"><Icon name="scroll" /></Tool>
          <Tool aria-label="图表平移"><Icon name="shift" /></Tool>
          <Divider $w={6} />
          <Drop name="indicators" /><Drop name="clock" /><Drop name="template" />
        </ToolGroup>
        <ToolEnd>
          <svg width="16" height="16" viewBox="0 0 16 16" aria-hidden="true"><circle cx="9.500" cy="5.500" r="4" fill="#fff" stroke="#3b5fae" strokeWidth="1.600" /><path d="M6.500 8.500L2 13.500" stroke="#3b5fae" strokeWidth="2.500" /></svg>
          <svg width="22" height="16" viewBox="0 0 22 16" aria-hidden="true"><path d="M9 5a6 4 0 1 1 8 5l2 3-4-2.500c-4 0-6-2-6-5.500z" fill="#f4f4f4" stroke="#888" /><path d="M1 9a5 3.500 0 1 1 5 4l-4 2 1-3c-1-1-2-2-2-3z" fill="#f4f4f4" stroke="#888" /></svg>
        </ToolEnd>
      </ToolRow>
      <ToolRow>
        <ToolGroup>
          <Handle />
          {PERIODS.map((p) => <Period key={p} $on={p === "H1"}>{p}</Period>)}
        </ToolGroup>
        <ToolGroup>
          <Handle />
          <Tool $on aria-label="光标"><Icon name="arrow" /></Tool>
          <Tool aria-label="十字线"><Icon name="crossHair" /></Tool>
          <Divider $w={7} />
          {["vline", "hline", "trend", "channel", "fibo", "text", "label"].map((n) => (
            <Tool key={n} aria-label={n}><Icon name={n} /></Tool>
          ))}
          <Drop name="shapes" />
        </ToolGroup>
      </ToolRow>

      <Main>
        <Side>
          <Panel>
            <PanelHead><PanelTitle>导航</PanelTitle><SideClose aria-label="关闭">×</SideClose></PanelHead>
            <PanelBody $h={140}>
              <Tree>
                {EXPERTS.map(([name, deep]) => (
                  <TreeItem key={name} $deep={deep}><ExpertIcon />{name}</TreeItem>
                ))}
              </Tree>
              <Scroll><ScrollArrow $up aria-label="上" /><Spacer $n={8} /><Thumb /><Spacer /><ScrollArrow aria-label="下" /></Scroll>
            </PanelBody>
            <Tabs $h={29}><Tab $on>常用</Tab><Tab>收藏夹</Tab></Tabs>
          </Panel>
          <Panel $grow>
            <PanelHead><PanelTitle>数据窗口</PanelTitle><SideClose aria-label="关闭">×</SideClose></PanelHead>
            <PanelBody $grow>
              <DataTable>
                <caption>
                  <CaptionLine>
                    <svg width="16" height="15" viewBox="0 0 16 15" aria-hidden="true">
                      <path d="M.5.5h15v14H.5z" fill="#eef6fd" stroke="#2f66a8" /><path d="M0 0h16v4H0z" fill="#2f66a8" />
                      <path d="M3 12l3-6 3 6 4-6" fill="none" stroke="#5b9bd8" strokeWidth="1.400" />
                    </svg>
                    USDCAD,H1
                  </CaptionLine>
                </caption>
                <tbody>
                  {BAR_DATA.map(([k, v]) => <tr key={k}><th scope="row">{k}</th><td>{v}</td></tr>)}
                </tbody>
              </DataTable>
            </PanelBody>
          </Panel>
          <Panel>
            <PanelHead><PanelTitle>市场报价: 18:44:12</PanelTitle><SideClose aria-label="关闭">×</SideClose></PanelHead>
            <PanelBody $h={150}>
              <QuoteTable>
                <colgroup><col style={{ width: 89 }} /><col style={{ width: 58 }} /><col style={{ width: 58 }} /><col /></colgroup>
                <thead><tr><th>交易品种</th><th>卖价</th><th>买价</th><th>!</th></tr></thead>
                <tbody>
                  {QUOTES.map(([s, bid, ask, spread, down]) => (
                    <QuoteRow key={s} $down={down}>
                      <td><SymbolName><TrendMark down={down} />{s}</SymbolName></td><td>{bid}</td><td>{ask}</td><td>{spread}</td>
                    </QuoteRow>
                  ))}
                </tbody>
              </QuoteTable>
              <Scroll><ScrollArrow $up aria-label="上" /><Thumb /><Spacer /><ScrollArrow aria-label="下" /></Scroll>
            </PanelBody>
            <Tabs $h={27}><Tab $on>交易品种</Tab><Tab>即时图</Tab></Tabs>
          </Panel>
        </Side>

        <ChartColumn>
          <ChartWindow>
            <Plot>
              <PriceChart />
              <ChartCaption>
                <svg width="8" height="4" style={{ width: 8, height: 4 }} aria-hidden="true"><path d="M0 4l4-4 4 4z" fill="#fff" /></svg>
                {"USDCAD,H1  1.32345 1.32372 1.32159 1.32248"}
              </ChartCaption>
              <ExpertMark>
                惯性ea
                <svg width="12" height="12" viewBox="0 0 12 12" style={{ width: 12, height: 12 }} aria-hidden="true">
                  <circle cx="6" cy="6" r="5" fill="none" stroke="#fff" /><path d="M4 4v1M8 4v1M3.500 7.500c1 1.500 4 1.500 5 0" fill="none" stroke="#fff" />
                </svg>
              </ExpertMark>
              <TradeBox>
                <TradeTop>
                  <TradeButton>SELL</TradeButton>
                  <Stepper><Step aria-label="减少" /><Volume aria-label="手数" defaultValue="0.67" /><Step $up aria-label="增加" /></Stepper>
                  <TradeButton>BUY</TradeButton>
                </TradeTop>
                <Quote><QuoteBase>1.32</QuoteBase><QuoteBig>24</QuoteBig><QuotePip>8</QuotePip></Quote>
                <Quote><QuoteBase>1.32</QuoteBase><QuoteBig>25</QuoteBig><QuotePip>3</QuotePip></Quote>
              </TradeBox>
            </Plot>
            <PriceAxis>
              {PRICES.map((p) => <PriceLabel key={p}>{p}</PriceLabel>)}
              <PriceTag>1.32248</PriceTag>
            </PriceAxis>
            <TimeAxis>{TIMES.map((t) => <TimeLabel key={t}>{t}</TimeLabel>)}</TimeAxis>
          </ChartWindow>
          <ChartTabs>
            <ChartTab>&nbsp;AUDUSD,H1</ChartTab><ChartTab>NZDUSD,H1</ChartTab><ChartTab>GBPUSD,H1</ChartTab>
            <Spacer />
            <ChartTab $on>USDCAD,H1</ChartTab>
            {["AUDCAD,H1", "GBPJPY,H1", "GBPAUD,H1", "EURGBP,H1", "XAUUSD,H1"].map((t) => <ChartTab key={t}>{t}</ChartTab>)}
            <TabArrows><TabArrow $left aria-label="向左" /><TabArrow aria-label="向右" /></TabArrows>
          </ChartTabs>
        </ChartColumn>
      </Main>

      <Terminal>
        <Spine><CloseButton aria-label="关闭">×</CloseButton><SpineTitle>终端</SpineTitle></Spine>
        <TerminalBody>
          <Orders>
            <OrderTable>
              <colgroup>
                <col style={{ width: 190 }} /><col style={{ width: 258 }} /><col /><col style={{ width: 145 }} /><col style={{ width: 145 }} /><col style={{ width: 221 }} />
              </colgroup>
              <thead><tr><th>订单<SortMark>/</SortMark></th><th>时间</th><th /><th>手续费</th><th>库存费</th><th>获利</th></tr></thead>
              <tbody>
                <tr>
                  <td colSpan={5}>
                    <Balance>
                      <svg width="9" height="9" aria-hidden="true"><circle cx="4.500" cy="4.500" r="3" fill="#ddd" stroke="#999" /></svg>
                      <span>余额: 14 103.94 USD &nbsp;净值: 14 103.94 &nbsp;可用预付款: 14 103.94</span>
                    </Balance>
                  </td>
                  <td>0.00</td>
                </tr>
              </tbody>
            </OrderTable>
          </Orders>
          <Tabs $h={27}>
            {TERMINAL_TABS.map(([t, n], i) => <Tab key={t} $on={i === 0}>{t}{n && <Count>{n}</Count>}</Tab>)}
          </Tabs>
        </TerminalBody>
      </Terminal>

      <StatusBar>
        <StatusText>寻求帮助,请按F1键</StatusText>
        <StatusCell $w={135}>Default</StatusCell>
        <StatusCell $w={117} /><StatusCell $w={82} /><StatusCell $w={81} /><StatusCell $w={79} /><StatusCell $w={80} /><StatusCell $w={222} />
      </StatusBar>
      <Taskbar>
        {["#a23fd0", "#e0609a", "#a8d8f0", "#f09048", "#3a6a9c", "#e84a12", "#f0a860", "#5aa8d8", "#e0a880"].map((c) => <Task key={c} $c={c} />)}
      </Taskbar>

      <Dialog role="dialog" aria-label="Expert - 惯性ea">
        <DialogHead>
          <DialogTitle>Expert - 惯性ea</DialogTitle>
          <HeadButton aria-label="帮助">?</HeadButton>
          <HeadButton $close aria-label="关闭">X</HeadButton>
        </DialogHead>
        <DialogBody>
          <SheetTabs><SheetTab>关于</SheetTab><SheetTab>常用</SheetTab><SheetTab $on>输入参数</SheetTab></SheetTabs>
          <Sheet>
            <ParamFrame>
              <ParamTable>
                <thead><tr><th>变量</th><th>赋值</th></tr></thead>
                <tbody>
                  {PARAMS.map(([kind, name, value]) => (
                    <tr key={name}><td><ParamName><KindIcon kind={kind} /><span>{splitHan(name)}</span></ParamName></td><td>{value}</td></tr>
                  ))}
                </tbody>
              </ParamTable>
              <Arrows width="150" height="70" viewBox="0 0 150 70" aria-hidden="true">
                <path d="M2 8l27 11 1-4 9 10-13-1 1-3z" fill="#e8392c" />
                <path d="M142 58L86 50l-1 5-13-9 15-3v4z" fill="#e8392c" />
              </Arrows>
            </ParamFrame>
            <SheetSide><PushButton>加载(<u>L</u>)</PushButton><PushButton>保存(<u>S</u>)</PushButton></SheetSide>
          </Sheet>
          <DialogFoot>
            <PushButton $default $w={73}>确定</PushButton><PushButton $w={73}>取消</PushButton><PushButton $w={73}>重设</PushButton>
          </DialogFoot>
        </DialogBody>
      </Dialog>

      <NetWidget>
        <NetBall>42%</NetBall>
        <NetPill>
          <Rates><Rate $c="#c44"><i>↑</i>6K/s</Rate><Rate $c="#2a9a5a"><i>↓</i>7.2K/s</Rate></Rates>
          <svg width="19" height="19" viewBox="0 0 19 19" aria-hidden="true">
            <circle cx="9" cy="10" r="8" fill="#3d86d2" /><path d="M4.500 10h9M9 5.500v9" stroke="#fff" strokeWidth="2" /><circle cx="15" cy="4" r="4" fill="#e23a2e" />
          </svg>
        </NetPill>
      </NetWidget>
      <Traffic>kb</Traffic>
      <Watermark>talkfx.com</Watermark>
    </Page>
  );
}
